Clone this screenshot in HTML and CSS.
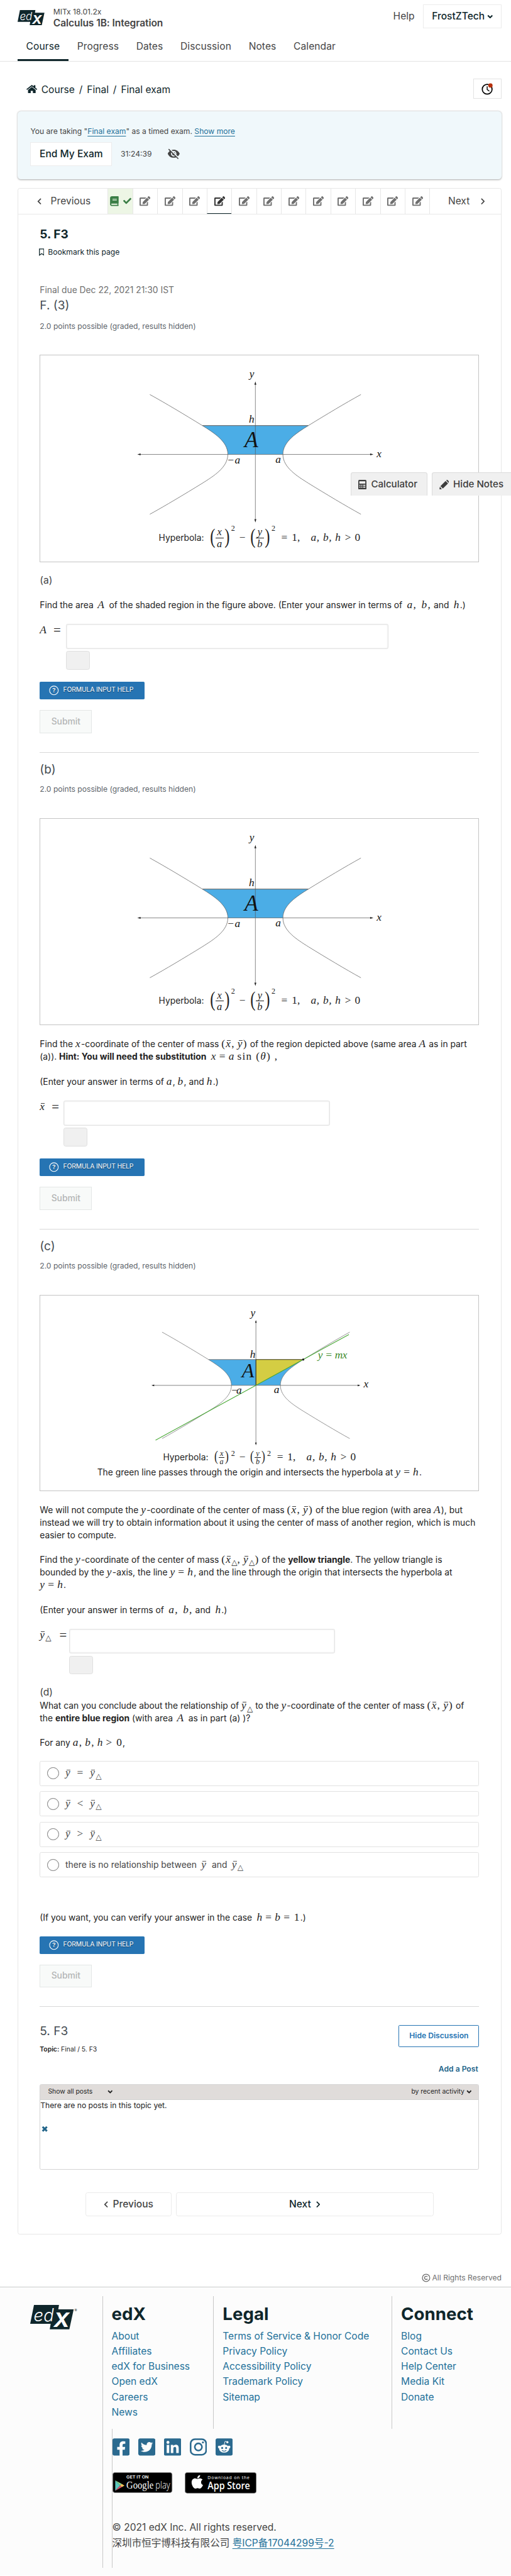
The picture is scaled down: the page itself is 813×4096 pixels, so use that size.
FILE: index.html
```html
<!DOCTYPE html>
<html lang="en">
<head>
<meta charset="utf-8">
<title>5. F3 | Final exam | Calculus 1B: Integration | edX</title>
<link rel="stylesheet" href="styles.css">
</head>
<body>
<svg class="defs" aria-hidden="true">
  <symbol id="edit" viewBox="0 0 576 512"><path d="M402.6 83.2l90.2 90.2c3.8 3.8 3.8 10 0 13.8L274.4 405.6l-92.8 10.3c-12.4 1.4-22.9-9.1-21.5-21.5l10.3-92.8L388.8 83.2c3.8-3.8 10-3.8 13.8 0zm162-22.9l-48.8-48.8c-15.2-15.2-39.9-15.2-55.2 0l-35.4 35.4c-3.8 3.8-3.8 10 0 13.8l90.2 90.2c3.8 3.8 10 3.8 13.8 0l35.4-35.4c15.2-15.3 15.2-40 0-55.2zM384 346.2V448H64V128h229.8c3.2 0 6.2-1.3 8.5-3.5l40-40c7.6-7.6 2.2-20.5-8.5-20.5H48C21.5 64 0 85.5 0 112v352c0 26.5 21.5 48 48 48h352c26.5 0 48-21.5 48-48V306.2c0-10.7-12.9-16-20.5-8.5l-40 40c-2.2 2.3-3.5 5.3-3.5 8.5z"/></symbol>
  <symbol id="left" viewBox="0 0 8 12"><path d="M7 1L2 6l5 5" fill="none" stroke="currentColor" stroke-width="2"/></symbol>
  <symbol id="right" viewBox="0 0 8 12"><path d="M1 1l5 5-5 5" fill="none" stroke="currentColor" stroke-width="2"/></symbol>
  <symbol id="down" viewBox="0 0 12 8"><path d="M1.5 1.5L6 6l4.500-4.500" fill="none" stroke="currentColor" stroke-width="2.600"/></symbol>
  <symbol id="logo" viewBox="0 0 81 45">
    <path d="M7 0h46l-1.300 8H80l-8 36.700H36l1.700-10H0z"/>
    <text x="6.500" y="30" class="logo-ed" textLength="37" lengthAdjust="spacingAndGlyphs">ed</text>
    <text x="43" y="40.500" class="logo-x" textLength="29" lengthAdjust="spacingAndGlyphs">X</text>
  </symbol>
  <symbol id="curves" viewBox="-260 -160 520 300" overflow="visible">
    <g id="branch" fill="none">
      <path d="M194-110C165-94 130-73 97.500-53C77-40 50.600-24 50.600 0C50.600 24 77 40 97.500 53C130 73 165 94 194 110"/>
      <path d="M-194-110C-165-94-130-73-97.500-53C-77-40-50.600-24-50.600 0C-50.600 24-77 40-97.500 53C-130 73-165 94-194 110"/>
    </g>
  </symbol>
  <symbol id="hyperbola" viewBox="0 0 806 310">
    <g transform="translate(395.500 182)">
      <path class="fill-blue" d="M-97.500-53H97.500C77-40 50.600-24 50.600 0H-50.600C-50.600-24-77-40-97.500-53z"/>
      <use href="#branch" class="curve"/>
      <path class="edge" d="M-97.500-53H97.500"/>
      <path class="edge axis" d="M-213 0H213M0-131V122"/>
      <path d="M-217 0l6-1.800v3.600zM217 0l-6-1.800v3.600zM0-134l-1.800 6h3.600zM0 125l-1.800-6h3.600z"/>
      <text class="sym" x="-11" y="-141">y</text>
      <text class="sym" x="-12" y="-58">h</text>
      <text class="sym big" x="-20" y="-13">A</text>
      <text class="sym" x="-52" y="17" textLength="24">−a</text>
      <text class="sym" x="37" y="16">a</text>
      <text class="sym" x="223" y="5">x</text>
    </g>
  </symbol>
</svg>

<header class="site-header">
  <svg class="logo logo-sm"><use href="#logo"/></svg>
  <div class="course-name"><span>MITx 18.01.2x</span><strong>Calculus 1B: Integration</strong></div>
  <a class="help">Help</a>
  <button class="user">FrostZTech <svg class="caret"><use href="#down"/></svg></button>
</header>
<nav class="tabs">
  <a class="tab active">Course</a><a class="tab">Progress</a><a class="tab">Dates</a><a class="tab">Discussion</a><a class="tab">Notes</a><a class="tab">Calendar</a>
</nav>

<div class="crumbs">
  <svg class="home" viewBox="0 0 20 16"><path d="M0 7.800L10 0l3.500 2.700V.5h3v4.600L20 7.800l-1.200 1.500L10 2.500 1.200 9.300z"/><path d="M10 3.800l7 5.400V16h-5v-5H8v5H3V9.200z"/></svg>
  <span>Course</span><i>/</i><span>Final</span><i>/</i><span>Final exam</span>
  <button class="clock"><svg viewBox="0 0 22 22"><circle cx="10.500" cy="11.500" r="9" fill="none" stroke="#000" stroke-width="2"/><path d="M10.500 6v6l4 3" fill="none" stroke="#000" stroke-width="1.600"/><circle cx="16.500" cy="4.500" r="4" fill="#b8310d"/></svg></button>
</div>

<section class="exam">
  <p>You are taking "<a>Final exam</a>" as a timed exam. <a>Show more</a></p>
  <div class="exam-row">
    <button>End My Exam</button><span>31:24:39</span>
    <svg viewBox="0 0 24 24"><path d="M12 7c2.760 0 5 2.240 5 5 0 .65-.13 1.260-.36 1.830l2.920 2.920c1.510-1.260 2.700-2.890 3.430-4.750-1.730-4.390-6-7.500-11-7.500-1.400 0-2.740.25-3.980.7l2.160 2.160C10.740 7.130 11.350 7 12 7zM2 4.270l2.280 2.280.46.46C3.080 8.300 1.780 10.020 1 12c1.730 4.390 6 7.500 11 7.500 1.550 0 3.030-.3 4.380-.84l.42.42L19.730 22 21 20.730 3.270 3 2 4.270zM7.530 9.800l1.550 1.550c-.05.21-.08.43-.08.65 0 1.660 1.340 3 3 3 .22 0 .44-.03.65-.08l1.550 1.550c-.67.33-1.410.53-2.200.53-2.760 0-5-2.240-5-5 0-.79.2-1.530.53-2.200zm4.310-.78l3.150 3.150.02-.16c0-1.660-1.340-3-3-3l-.17.01z"/></svg>
  </div>
</section>

<main class="sequence">
  <nav class="steps">
    <a class="prev"><svg class="chev"><use href="#left"/></svg>Previous</a>
    <a class="step done"><svg class="book" viewBox="0 0 448 512"><path d="M448 360V24c0-13.300-10.700-24-24-24H96C43 0 0 43 0 96v320c0 53 43 96 96 96h328c13.300 0 24-10.700 24-24v-16c0-7.500-3.500-14.300-8.900-18.700-4.200-15.400-4.200-59.300 0-74.700 5.400-4.300 8.900-11.100 8.900-18.600zM128 134c0-3.300 2.700-6 6-6h212c3.300 0 6 2.700 6 6v20c0 3.300-2.700 6-6 6H134c-3.300 0-6-2.700-6-6v-20zm0 64c0-3.300 2.700-6 6-6h212c3.300 0 6 2.700 6 6v20c0 3.300-2.700 6-6 6H134c-3.300 0-6-2.700-6-6v-20zm253.400 250H96c-17.700 0-32-14.300-32-32 0-17.600 14.400-32 32-32h285.400c-1.900 17.100-1.900 46.900 0 64z"/></svg><svg class="check" viewBox="0 0 512 512"><path d="M173.900 439.400l-166.400-166.400c-10-10-10-26.200 0-36.200l36.200-36.200c10-10 26.200-10 36.200 0L192 312.700 432.100 72.600c10-10 26.200-10 36.200 0l36.200 36.200c10 10 10 26.200 0 36.200l-294.400 294.400c-10 10-26.200 10-36.200 0z"/></svg></a>
    <a class="step"><svg><use href="#edit"/></svg></a><a class="step"><svg><use href="#edit"/></svg></a><a class="step"><svg><use href="#edit"/></svg></a><a class="step current"><svg><use href="#edit"/></svg></a><a class="step"><svg><use href="#edit"/></svg></a><a class="step"><svg><use href="#edit"/></svg></a><a class="step"><svg><use href="#edit"/></svg></a><a class="step"><svg><use href="#edit"/></svg></a><a class="step"><svg><use href="#edit"/></svg></a><a class="step"><svg><use href="#edit"/></svg></a><a class="step"><svg><use href="#edit"/></svg></a><a class="step"><svg><use href="#edit"/></svg></a>
    <a class="next">Next<svg class="chev"><use href="#right"/></svg></a>
  </nav>

  <div class="unit">
    <h1>5. F3</h1>
    <a class="bookmark"><svg viewBox="0 0 10 14"><path d="M.9.900h8.200v11.500L5 9.600.9 12.400z" fill="none" stroke="currentColor" stroke-width="1.500"/></svg>Bookmark this page</a>
    <p class="due">Final due Dec 22, 2021 21:30 IST</p>
    <h2>F. (3)</h2>
    <p class="points">2.0 points possible (graded, results hidden)</p>

    <figure class="figure">
      <svg class="plot"><use href="#hyperbola"/></svg>
      <figcaption class="cap">Hyperbola: <span class="paren">(</span><span class="frac"><i>x</i><i>a</i></span><span class="paren">)</span><sup>2</sup><b class="op">−</b><span class="paren">(</span><span class="frac"><i>y</i><i>b</i></span><span class="paren">)</span><sup>2</sup><b class="op eq">=</b><b class="one">1,</b><i class="abh">a, b, h</i><b class="gt">&gt;</b><b>0</b></figcaption>
    </figure>

    <h3 class="part-a">(a)</h3>
    <p class="find-a">Find the area <i class="m wide">A</i> of the shaded region in the figure above. (Enter your answer in terms of <i class="m ml">a,</i> <i class="m ml">b,</i> and <i class="m ml">h</i>.)</p>
    <div class="answer">
      <label><i class="m">A</i><b class="m up">=</b></label>
      <div><input class="long" type="text"><span class="preview"></span></div>
    </div>
    <button class="formula"><svg viewBox="0 0 18 18"><circle cx="9" cy="9" r="8" fill="none" stroke="#fff" stroke-width="1.200"/><text x="9" y="13" text-anchor="middle">?</text></svg>FORMULA INPUT HELP</button>
    <button class="submit">Submit</button>
    <hr>

    <h2 class="sub">(b)</h2>
    <p class="points">2.0 points possible (graded, results hidden)</p>
    <figure class="figure">
      <svg class="plot"><use href="#hyperbola"/></svg>
      <figcaption class="cap">Hyperbola: <span class="paren">(</span><span class="frac"><i>x</i><i>a</i></span><span class="paren">)</span><sup>2</sup><b class="op">−</b><span class="paren">(</span><span class="frac"><i>y</i><i>b</i></span><span class="paren">)</span><sup>2</sup><b class="op eq">=</b><b class="one">1,</b><i class="abh">a, b, h</i><b class="gt">&gt;</b><b>0</b></figcaption>
    </figure>
    <p class="text-b">Find the <i class="m">x</i>-coordinate of the center of mass <b class="m up">(</b><i class="m bar">x</i><b class="m up">,</b> <i class="m bar">y</i><b class="m up">)</b> of the region depicted above (same area <i class="m">A</i> as in part<br>(a)). <strong>Hint: You will need the substitution</strong> <i class="m ml">x</i> <b class="m up">=</b> <i class="m">a</i> <b class="m up sin">sin (</b><i class="m">θ</i><b class="m up">) ,</b></p>
    <p class="enter">(Enter your answer in terms of <i class="m">a</i>, <i class="m">b</i>, and <i class="m">h</i>.)</p>
    <div class="answer answer-b">
      <label><i class="m bar">x</i><b class="m up">=</b></label>
      <div><input type="text"><span class="preview"></span></div>
    </div>
    <button class="formula"><svg viewBox="0 0 18 18"><circle cx="9" cy="9" r="8" fill="none" stroke="#fff" stroke-width="1.200"/><text x="9" y="13" text-anchor="middle">?</text></svg>FORMULA INPUT HELP</button>
    <button class="submit">Submit</button>
    <hr>

    <h2 class="sub">(c)</h2>
    <p class="points">2.0 points possible (graded, results hidden)</p>
    <figure class="figure figure-c">
      <svg class="plot" viewBox="0 0 806 283">
        <g transform="translate(396.500 165)">
          <g transform="scale(.889)">
            <path class="fill-blue" d="M-97.500-53H97.500C77-40 50.600-24 50.600 0H-50.600C-50.600-24-77-40-97.500-53z"/>
            <use href="#branch" class="curve"/>
          </g>
          <path class="fill-yellow" d="M0-47.500H87L0 0z"/>
          <path class="edge axis" d="M-190 0H190M0-117V108"/>
          <path class="edge" d="M-87-47.500H0"/>
          <path class="edge-dark" d="M0 0V-47.500H87"/>
          <path d="M-192 0l5-1.600v3.200zM192 0l-5-1.600v3.200zM0-120l-1.600 5h3.200zM0 110l-1.600-5h3.200z"/>
          <path class="green" d="M171-93.400L-184.500 100.700"/>
          <circle cx="87" cy="-47.500" r="2"/>
          <text class="sym" x="-10" y="-127">y</text>
          <text class="sym" x="-11" y="-51">h</text>
          <text class="sym mid" x="-26" y="-15">A</text>
          <text class="sym" x="-46" y="15" textLength="20">−a</text>
          <text class="sym" x="33" y="14">a</text>
          <text class="sym" x="198" y="4">x</text>
          <text class="sym green-text" x="114" y="-50" textLength="54">y = mx</text>
        </g>
      </svg>
      <figcaption class="cap small">Hyperbola: <span class="paren">(</span><span class="frac"><i>x</i><i>a</i></span><span class="paren">)</span><sup>2</sup><b class="op">−</b><span class="paren">(</span><span class="frac"><i>y</i><i>b</i></span><span class="paren">)</span><sup>2</sup><b class="op eq">=</b><b class="one">1,</b><i class="abh">a, b, h</i><b class="gt">&gt;</b><b>0</b></figcaption>
      <p class="cap2">The green line passes through the origin and intersects the hyperbola at <i class="m">y</i> <b class="m up">=</b> <i class="m">h</i>.</p>
    </figure>
    <p class="text-c">We will not compute the <i class="m">y</i>-coordinate of the center of mass <b class="m up">(</b><i class="m bar">x</i><b class="m up">,</b> <i class="m bar">y</i><b class="m up">)</b> of the blue region (with area <i class="m">A</i>), but<br>instead we will try to obtain information about it using the center of mass of another region, which is much<br>easier to compute.</p>
    <p class="text-c2">Find the <i class="m">y</i>-coordinate of the center of mass <b class="m up">(</b><i class="m bar">x</i><span class="tri">△</span><b class="m up">,</b> <i class="m bar">y</i><span class="tri">△</span><b class="m up">)</b> of the <strong>yellow triangle</strong>. The yellow triangle is<br>bounded by the <i class="m">y</i>-axis, the line <i class="m">y</i> <b class="m up">=</b> <i class="m">h</i>, and the line through the origin that intersects the hyperbola at<br><i class="m">y</i> <b class="m up">=</b> <i class="m">h</i>.</p>
    <p class="enter">(Enter your answer in terms of <i class="m ml">a,</i> <i class="m ml">b,</i> and <i class="m ml">h</i>.)</p>
    <div class="answer answer-c">
      <label><span><i class="m bar">y</i><span class="tri">△</span></span><b class="m up">=</b></label>
      <div><input type="text"><span class="preview"></span></div>
    </div>
    <h3 class="part-d">(d)</h3>
    <p class="text-d">What can you conclude about the relationship of <i class="m bar">y</i><span class="tri">△</span> to the <i class="m">y</i>-coordinate of the center of mass <b class="m up">(</b><i class="m bar">x</i><b class="m up">,</b> <i class="m bar">y</i><b class="m up">)</b> of<br>the <strong>entire blue region</strong> (with area <i class="m wide">A</i> as in part (a) )?</p>
    <p class="any">For any <i class="m">a</i><b class="m up">,</b> <i class="m">b</i><b class="m up">,</b> <i class="m">h</i> <b class="m up">&gt; 0</b>,</p>
    <div class="options">
      <label><input type="radio" name="rel"><span><i class="m bar">y</i> <b class="m up">&nbsp;=&nbsp;</b> <i class="m bar">y</i><span class="tri">△</span></span></label>
      <label><input type="radio" name="rel"><span><i class="m bar">y</i> <b class="m up">&nbsp;&lt;&nbsp;</b> <i class="m bar">y</i><span class="tri">△</span></span></label>
      <label><input type="radio" name="rel"><span><i class="m bar">y</i> <b class="m up">&nbsp;&gt;&nbsp;</b> <i class="m bar">y</i><span class="tri">△</span></span></label>
      <label><input type="radio" name="rel"><span>there is no relationship between <i class="m bar ml">y</i> &nbsp;and <i class="m bar ml">y</i><span class="tri">△</span></span></label>
    </div>
    <p class="verify">(If you want, you can verify your answer in the case <i class="m ml">h</i> <b class="m up">=</b> <i class="m">b</i> <b class="m up">= 1</b>.)</p>
    <button class="formula"><svg viewBox="0 0 18 18"><circle cx="9" cy="9" r="8" fill="none" stroke="#fff" stroke-width="1.200"/><text x="9" y="13" text-anchor="middle">?</text></svg>FORMULA INPUT HELP</button>
    <button class="submit submit-d">Submit</button>
    <hr>

    <section class="discussion">
      <div class="disc-head">
        <div><h2>5. F3</h2><p><strong>Topic:</strong> Final / 5. F3</p></div>
        <button>Hide Discussion</button>
      </div>
      <a class="add">Add a Post</a>
      <div class="posts">
        <div class="filters"><span class="show">Show all posts <svg class="caret"><use href="#down"/></svg></span><span>by recent activity <svg class="caret"><use href="#down"/></svg></span></div>
        <p>There are no posts in this topic yet.</p>
        <svg class="close" viewBox="0 0 12 12"><path d="M2 2l8 8M10 2l-8 8" stroke="currentColor" stroke-width="3.600"/></svg>
      </div>
    </section>
    <div class="pager">
      <a class="back"><svg class="chev"><use href="#left"/></svg>Previous</a>
      <a class="forward">Next<svg class="chev"><use href="#right"/></svg></a>
    </div>
  </div>
</main>

<div class="tools">
  <a class="calc"><svg viewBox="0 0 15 18"><path fill-rule="evenodd" d="M2 0h11a2 2 0 0 1 2 2v14a2 2 0 0 1-2 2H2a2 2 0 0 1-2-2V2a2 2 0 0 1 2-2zm0 2.500V7h11V2.500zM2 9v2h2V9zm3.500 0v2h2V9zM9 9v2h4V9zm-7 3.300v2.200h2v-2.200zm3.500 0v2.200h2v-2.200zm3.500 0v2.200h4v-2.200z"/></svg>Calculator</a>
  <a class="notes"><svg viewBox="0 0 18 18"><path d="M0 18l1-5.500L4.500 17zM2 11.500L11.500 2l4.500 4.500L6.500 16zM12.500 1l1-.7q1-.6 2 .4l2 2q.8 1-.1 2l-.6.700z"/></svg>Hide Notes</a>
</div>

<p class="rights"><svg viewBox="0 0 16 16"><circle cx="8" cy="8" r="6.800" fill="none" stroke="currentColor" stroke-width="1.500"/><path d="M10.500 6.200a3 3 0 1 0 0 3.600" fill="none" stroke="currentColor" stroke-width="1.600"/></svg>All Rights Reserved</p>

<footer class="footer">
  <div class="brand"><svg class="logo logo-lg"><use href="#logo"/></svg><span>®</span></div>
  <div class="foot-main">
    <div class="cols">
      <div class="col"><h2>edX</h2><a>About</a><a>Affiliates</a><a>edX for Business</a><a>Open edX</a><a>Careers</a><a>News</a></div>
      <div class="col legal"><h2>Legal</h2><a>Terms of Service &amp; Honor Code</a><a>Privacy Policy</a><a>Accessibility Policy</a><a>Trademark Policy</a><a>Sitemap</a></div>
      <div class="col"><h2>Connect</h2><a>Blog</a><a>Contact Us</a><a>Help Center</a><a>Media Kit</a><a>Donate</a></div>
    </div>
    <div class="foot-low">
      <div class="social">
        <svg viewBox="0 32 448 448"><path d="M400 32H48A48 48 0 0 0 0 80v352a48 48 0 0 0 48 48h137.250V327.690h-63V256h63v-54.640c0-62.150 37-96.480 93.670-96.480 27.140 0 55.520 4.840 55.520 4.840v61h-31.270c-30.810 0-40.420 19.120-40.420 38.730V256h68.780l-11 71.690h-57.780V480H400a48 48 0 0 0 48-48V80a48 48 0 0 0-48-48z"/></svg>
        <svg viewBox="0 32 448 448"><path d="M400 32H48C21.500 32 0 53.500 0 80v352c0 26.500 21.500 48 48 48h352c26.500 0 48-21.500 48-48V80c0-26.500-21.500-48-48-48zm-48.900 158.800c.2 2.800.2 5.700.2 8.500 0 86.700-66 186.600-186.600 186.600-37.200 0-71.700-10.800-100.700-29.400 5.300.6 10.400.8 15.800.8 30.700 0 58.900-10.400 81.400-28-28.800-.6-53-19.500-61.300-45.500 10.100 1.500 19.200 1.500 29.600-1.200-30-6.100-52.500-32.500-52.500-64.400v-.8c8.700 4.900 18.900 7.900 29.600 8.300a65.400 65.400 0 0 1-29.200-54.600c0-12.200 3.200-23.400 8.900-33.100 32.300 39.800 80.800 65.800 135.200 68.600-9.300-44.500 24-80.600 64-80.600 18.900 0 35.900 7.900 47.900 20.700 14.800-2.800 29-8.300 41.600-15.800-4.900 15.200-15.200 28-28.800 36.100 13.200-1.400 26-5.100 37.800-10.200-8.900 13.100-20.100 24.700-32.900 34z"/></svg>
        <svg viewBox="0 32 448 448"><path d="M416 32H31.900C14.300 32 0 46.500 0 64.300v383.400C0 465.500 14.300 480 31.900 480H416c17.600 0 32-14.500 32-32.300V64.300c0-17.800-14.400-32.300-32-32.300zM135.400 416H69V202.200h66.500V416zm-33.200-243c-21.300 0-38.500-17.300-38.500-38.500S80.900 96 102.200 96c21.200 0 38.500 17.300 38.500 38.500 0 21.300-17.200 38.500-38.500 38.500zm282.100 243h-66.400V312c0-24.800-.5-56.700-34.500-56.700-34.600 0-39.900 27-39.900 54.900V416h-66.400V202.200h63.700v29.200h.9c8.900-16.800 30.600-34.500 62.900-34.500 67.200 0 79.700 44.300 79.700 101.900V416z"/></svg>
        <svg viewBox="0 0 32 32"><rect x="1.500" y="1.500" width="29" height="29" rx="8" fill="none" stroke="currentColor" stroke-width="3"/><circle cx="16" cy="16" r="6.700" fill="none" stroke="currentColor" stroke-width="3"/><circle cx="24.500" cy="7.500" r="1.900"/></svg>
        <svg viewBox="0 0 32 32"><rect width="32" height="32" rx="3.400"/><g fill="#fcfcfc"><ellipse cx="16" cy="19" rx="9.500" ry="7.500"/><circle cx="7" cy="16" r="2.600"/><circle cx="25" cy="16" r="2.600"/><circle cx="22" cy="7" r="2"/><path d="M16 12l1.700-6.500 4.500 1" fill="none" stroke="#fcfcfc" stroke-width="1.100"/></g><circle cx="12.300" cy="17.800" r="1.800"/><circle cx="19.700" cy="17.800" r="1.800"/><path d="M12 22.300q4 2.800 8 0" fill="none" stroke="currentColor" stroke-width="1.200"/></svg>
      </div>
      <div class="badges">
        <svg class="gplay" viewBox="0 0 110 38"><rect x=".5" y=".5" width="109" height="37" rx="4" stroke="#8a8a8a"/><path d="M5 15v19l9-9.500z" fill="#5bc8c0"/><path d="M5 15l9 9.500 3-3z" fill="#8bd48e"/><path d="M14 24.500l3-3 5 3-5 3z" fill="#f3c15a"/><path d="M5 34l9-9.500 3 3z" fill="#d8506a"/><text x="25.500" y="11" class="b-sm" textLength="41" lengthAdjust="spacingAndGlyphs">GET IT ON</text><text x="25.500" y="29.500" class="b-serif" textLength="50" lengthAdjust="spacingAndGlyphs">Google</text><text x="79" y="29.500" class="b-light" textLength="27" lengthAdjust="spacingAndGlyphs">play</text></svg>
        <svg class="astore" viewBox="0 0 132 39"><rect x=".5" y=".5" width="131" height="38" rx="4" stroke="#8a8a8a"/><path transform="translate(12.300 3.500) scale(.0555)" fill="#fff" d="M318.700 268.700c-.2-36.700 16.400-64.400 50-84.800-18.800-26.900-47.200-41.700-84.700-44.600-35.500-2.800-74.300 20.700-88.500 20.700-15 0-49.400-19.700-76.400-19.700C63.300 141.200 4 184.800 4 273.500q0 39.300 14.400 81.200c12.800 36.700 59 126.700 107.200 125.200 25.200-.6 43-17.900 75.800-17.900 31.800 0 48.300 17.900 76.400 17.900 48.600-.7 90.400-82.500 102.600-119.300-65.200-30.700-61.700-90-61.700-91.900zm-56.600-164.200c27.300-32.400 24.800-61.900 24-72.500-24.100 1.400-52 16.400-67.900 34.900-17.500 19.800-27.800 44.300-25.600 71.900 26.100 2 49.900-11.400 69.500-34.300z"/><text x="42" y="13" class="b-dl" textLength="77">Download on the</text><text x="42" y="31" class="b-app" textLength="78" lengthAdjust="spacingAndGlyphs">App Store</text></svg>
      </div>
      <p>© 2021 edX Inc. All rights reserved.</p>
      <p>深圳市恒宇博科技有限公司 <a>粤ICP备17044299号-2</a></p>
    </div>
  </div>
</footer>
</body>
</html>
```
FILE: styles.css
```css
html { background: #fff; overflow: hidden; }
* { box-sizing: border-box; }
body {
  margin: 0;
  position: relative;
  zoom: .8655;
  width: 939px;
  height: 4732px;
  overflow: hidden;
  font-family: Inter, "Noto Sans CJK SC", sans-serif;
  font-size: 18px;
  line-height: 28px;
  color: #454545;
  white-space: nowrap;
}
h1, h2, h3, p, figure { margin: 0; font-weight: 400; }
svg { display: block; fill: currentColor; flex: none; }
button, input { font: inherit; color: inherit; background: #fff; margin: 0; padding: 0; }
.defs { display: none; }

/* header */
.site-header { display: flex; height: 60px; padding: 8px 17px 8px 32px; }
.logo { color: #0f262b; }
.logo-sm { width: 50px; height: 28px; margin-top: 10px; }
.logo-ed { font: italic 300 32px Inter, sans-serif; fill: #fff; }
.logo-x { font: italic 700 36px Inter, sans-serif; fill: #fff; }
.course-name { margin-left: 16px; padding-top: 2px; font-size: 14px; line-height: 22px; flex: 1; }
.course-name span, .course-name strong { display: block; }
.course-name strong { font-size: 18px; font-weight: 600; line-height: 20px; letter-spacing: -.1px; }
.help { line-height: 44px; margin-right: 16px; }
.user { width: 144px; height: 44px; border: 1px solid #ececec; color: #0f262b; font-weight: 500; display: flex; align-items: center; justify-content: center; gap: 4px; }
.caret { width: 11px; height: 8px; }
.tabs { display: flex; height: 53px; padding-left: 32px; border-bottom: 1px solid #e3e3e3; letter-spacing: .1px; }
.tab { padding: 12px 16px 0; }
.tab.active { color: #0f262b; border-bottom: 4px solid #0f262b; }

.crumbs { display: flex; align-items: center; height: 37px; margin: 32px 17px 0 48px; color: #0f262b; }
.crumbs i { font-style: normal; margin: 0 8px; }
.crumbs .home { width: 20px; height: 16px; margin-right: 8px; }
.clock { width: 52px; height: 37px; border: 1px solid #e3e3e3; margin-left: auto; display: grid; place-items: center; }
.clock svg { width: 22px; height: 22px; }
.crumbs span, .crumbs i { padding-top: 4px; }

.exam { margin: 22px 17px 0 32px; height: 125px; padding: 27px 24px; background: #f0f8fb; border-radius: 6px; box-shadow: 0 1px 3px rgba(0, 0, 0, .35); font-size: 14px; line-height: 20px; }
.exam a { color: #23719a; text-decoration: underline; text-underline-offset: 3px; }
.exam-row { display: flex; align-items: center; margin-top: 10px; }
.exam-row button { width: 150px; height: 44px; border: 1px solid #ececec; font-size: 18px; font-weight: 500; color: #0f262b; margin-right: 16px; }
.exam-row svg { width: 24px; height: 24px; margin-left: 28px; }

/* sequence */
.sequence { margin: 16px 17px 0 32px; height: 3760px; border: 1px solid #e7e7e7; border-radius: 4px; }
.steps { display: flex; height: 48px; border-bottom: 1px solid #e7e7e7; }
.steps a { display: flex; align-items: center; }
.prev { width: 165px; padding-left: 35px; gap: 17px; }
.next { flex: 1; padding-left: 33px; gap: 20px; border-left: 1px solid #e7e7e7; }
.chev { width: 8px; height: 12px; }
.step { width: 45.500px; height: 47px; border-left: 1px solid #e7e7e7; justify-content: center; color: #707070; }
.step svg { width: 20px; height: 18px; }
.step.current { color: #333; border-bottom: 2px solid #0f262b; padding-top: 2px; }
.step.done { background: #edf6e5; color: #3b7e46; gap: 8px; }
.step .book { width: 16px; height: 18px; }
.step .check { width: 15px; height: 15px; }

.unit { padding: 0 40px; font-size: 16px; line-height: 24px; color: #222; }
h1 { margin-top: 23px; font-size: 22px; line-height: 28px; font-weight: 700; color: #0f262b; }
.bookmark { display: flex; align-items: center; margin: 8px 0 0 -2px; gap: 7px; font-size: 14px; line-height: 20px; color: #0f262b; }
.bookmark svg { width: 10px; height: 14px; }
.due { margin-top: 48px; color: #707070; }
.unit h2 { margin-top: 3px; font-size: 22px; line-height: 28px; color: #454c52; }
.points { margin-top: 13px; font-size: 14px; line-height: 20px; color: #5e656b; }
.unit .sub { margin-top: 17px; }
.sub + .points { margin-top: 12px; }
.figure { margin-top: 43px; height: 381px; border: 1px solid #c4c4c4; }
.plot { width: 806px; height: 310px; color: #222; }
.fill-blue { fill: #4bade7; }
.fill-yellow { fill: #d4cd43; }
.curve { stroke: #666; stroke-width: .9; fill: none; }
.edge { stroke: #777; stroke-width: 1.300; }
.axis { stroke: #555; stroke-width: 1; opacity: .8; }
.edge-dark { fill: none; stroke: #3a3a22; stroke-width: 1.200; }
.green { stroke: #48a834; stroke-width: 1.200; }
.sym { font: italic 20px "Liberation Serif", serif; fill: #111; }
.sym.big { font-size: 41px; }
.sym.mid { font-size: 37px; }
.sym.green-text { fill: #3b8a28; }
.cap { display: flex; align-items: center; justify-content: center; height: 50px; font-size: 16px; }
.cap b, .cap i, .cap sup { font-family: "Liberation Serif", serif; font-weight: 400; font-size: 20px; }
.paren { font: 38px/40px "Liberation Serif", serif; width: 11px; transform: scaleX(.75); padding-bottom: 5px; }
.cap > .paren:first-of-type { margin-left: 10px; }
.frac { display: grid; width: 15px; text-align: center; line-height: 20px; }
.frac i:first-child { border-bottom: 1px solid #222; }
.cap .frac i { font-size: 19px; }
.cap sup { font-size: 14px; line-height: 14px; align-self: flex-start; margin-left: 3px; }
.cap .op { margin: 0 8px; }
.cap .eq { margin: 0 8px 0 11px; }
.cap .one { margin-right: 20px; }
.cap .abh { letter-spacing: .8px; }
.cap .gt { margin: 0 7px; }
.figure-c { height: 361px; }
.figure-c .plot { height: 283px; }
.cap.small { height: 30px; }
.small .paren { font-size: 27px; line-height: 28px; width: 9px; }
.small .frac { line-height: 14px; width: 11px; }
.cap.small .frac i { font-size: 14px; }
.cap2 { text-align: center; }

/* inline maths */
.m { font-family: "Liberation Serif", "DejaVu Serif", serif; font-size: 20px; line-height: 1px; font-weight: 400; letter-spacing: 1.500px; }
.wide { margin: 0 3px; }
.ml { margin-left: 4px; }
.bar { background: linear-gradient(currentColor, currentColor) no-repeat 60% 5px / 7px 1px; }
.tri { font: 14px/1px "DejaVu Sans", sans-serif; position: relative; top: 4px; }

.unit .part-a { margin-top: 22px; font-size: 18px; line-height: 24px; color: #454545; }
.find-a { margin-top: 21px; }
.answer { display: flex; margin-top: 22px; height: 84px; }
.answer label { display: flex; justify-content: space-between; width: 48px; height: 24px; line-height: 24px; padding-right: 8px; }
.answer label .m { line-height: 24px; }
.answer label .up { font-size: 24px; }
.answer input { display: block; width: 489px; height: 46px; border: 2px solid #e2e2e2; border-radius: 3px; box-shadow: inset 0 0 3px rgba(0, 0, 0, .12); }
.answer .long { width: 593px; }
.preview { display: block; width: 44px; height: 34px; margin-top: 4px; border: 1px solid #e0e0e0; border-radius: 4px; background: #f0f0f0; }
.answer-b label { width: 44px; padding-right: 7px; }
.answer-c label { width: 54px; padding-right: 3px; }
.formula { display: flex; align-items: center; gap: 8px; width: 193px; height: 33px; margin-top: 22px; padding-left: 17px; border: 0; border-radius: 2px; background: #2674b3; color: #fff; font-size: 12px; letter-spacing: -.2px; text-shadow: 0 1px 1px #173f63; }
.formula svg { width: 18px; height: 18px; }
.formula text { font-weight: 600; font-size: 11px; }
.submit { display: block; width: 96px; height: 42px; margin-top: 20px; border: 1px solid #e4e7e6; background: #f8faf9; color: #b3b5b5; font-weight: 500; }
hr { height: 1px; margin: 35px 0 0; border: 0; background: #d8d8d8; }
.text-b { margin-top: 22px; }
.enter { margin-top: 22px; }
.text-c { margin-top: 23px; line-height: 23.300px; }
.text-c2 { margin-top: 21px; line-height: 23.500px; }
.unit .part-d { margin-top: 22px; font-size: 18px; line-height: 24px; color: #454545; }
.text-d { line-height: 23.500px; }
.any { margin-top: 21px; }
.options { display: grid; gap: 10px; margin-top: 21px; color: #454545; }
.options label { display: flex; align-items: center; height: 46px; border: 2px solid #e2e2e2; border-radius: 3px; padding-left: 12px; gap: 12px; }
.options input { appearance: none; width: 22px; height: 22px; border: 1px solid #767676; border-radius: 50%; }
.verify { margin-top: 62px; }
.submit-d { margin-top: 19px; }

.disc-head { display: flex; justify-content: space-between; margin-top: 33px; height: 56px; }
.unit .disc-head h2 { margin-top: -2px; }
.disc-head p { font-size: 12px; line-height: 20px; margin-top: 9px; }
.disc-head strong { font-weight: 600; }
.disc-head button { width: 148px; height: 41px; border: 1px solid #2674b3; border-radius: 2px; color: #2674b3; font-size: 14px; font-weight: 600; }
.add { display: block; text-align: right; padding-right: 2px; margin-top: 15px; line-height: 20px; font-size: 14px; font-weight: 600; color: #23658a; }
.posts { margin-top: 18px; height: 157px; border: 1px solid #d4d4d4; border-bottom-width: 2px; border-radius: 3px; font-size: 14px; line-height: 20px; color: #222; }
.filters { display: flex; justify-content: space-between; height: 28px; padding: 0 12px 0 14px; background: #e0dcda; font-size: 12px; line-height: 28px; border-bottom: 1px solid #d0d0d0; }
.filters span { display: flex; align-items: center; gap: 4px; }
.filters .show { gap: 27px; }
.filters .caret { width: 10px; height: 7px; }
.close { width: 12px; height: 12px; margin: 27px 0 0 2px; color: #23658a; }
.pager { display: flex; gap: 8px; margin: 42px 84px 0; font-size: 18px; font-weight: 500; }
.pager a { display: flex; align-items: center; justify-content: center; gap: 9px; height: 44px; border: 1px solid #ebebeb; border-radius: 4px; color: #454545; }
.back { width: 158px; }
.pager .forward { flex: 1; color: #0f262b; }

/* floating tools */
.tools { position: absolute; top: 868px; right: 0; display: flex; gap: 8px; font-size: 17.500px; font-weight: 500; color: #3c3c3c; }
.tools a { display: flex; align-items: center; height: 43px; background: #f0f0f0; border: 1px solid #dcdcdc; border-bottom: 0; border-radius: 4px 4px 0 0; }
.calc { width: 141px; padding-left: 12px; gap: 9px; }
.tools .notes { width: 145px; padding-left: 12px; gap: 8px; border-right: 0; border-top-right-radius: 0; }
.tools .calc svg { width: 15px; height: 18px; }
.tools .notes svg { width: 18px; height: 18px; }

.rights { display: flex; justify-content: flex-end; align-items: center; gap: 3px; margin: 70px 17px 0; height: 20px; font-size: 14px; color: #707070; }
.rights svg { width: 16px; height: 16px; }

/* footer */
.footer { display: flex; height: 531px; margin-top: 6px; padding-top: 16px; border-top: 1px solid #c8cccb; background: #fcfcfc; }
.brand { display: flex; width: 188px; padding: 16px 0 0 56px; font-size: 7px; line-height: 20px; }
.logo-lg { width: 81px; height: 45px; }
.foot-main { border-left: 1px solid #c8c8c8; height: 499px; padding-left: 16px; }
.cols { display: flex; height: 244px; }
.col { width: 187px; padding: 15px 0 0; color: #23719a; }
.col + .col { border-left: 1px solid #c8c8c8; padding-left: 16px; }
.col.legal { width: 328px; }
.col a { display: block; }
.col h2 { font-size: 32px; line-height: 36px; font-weight: 700; color: #0f262b; margin-bottom: 9px; }
.foot-low { border-left: 1px solid #c8c8c8; height: 255px; padding-top: 18px; }
.social { display: flex; gap: 16px; color: #2b6a8f; }
.social svg { width: 31.500px; height: 32px; }
.badges { display: flex; gap: 22px; margin: 30px 0 49px 1px; color: #000; }
.gplay { width: 110px; height: 38px; }
.astore { width: 132px; height: 39px; }
.badges text { fill: #fff; }
.b-sm { font: 600 7px Inter, sans-serif; }
.b-serif { font: 20px "Liberation Serif", serif; }
.b-light { font: 300 18px "Open Sans", sans-serif; }
.b-dl { font: 500 8px "Open Sans", sans-serif; }
.b-app { font: 600 18px "Open Sans", sans-serif; }
.foot-low a { color: #23719a; text-decoration: underline; text-underline-offset: 3px; }
```
